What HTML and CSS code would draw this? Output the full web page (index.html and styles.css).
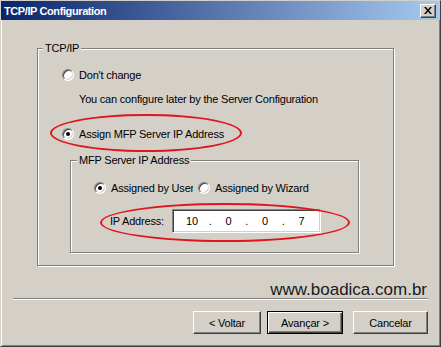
FILE: index.html
```html
<!DOCTYPE html>
<html lang="en">
<head>
    <meta charset="UTF-8">
    <title>TCP/IP Configuration</title>
    <link rel="stylesheet" href="styles.css">
</head>
<body>
<div class="window">
    <div class="titlebar">
        <span class="title">TCP/IP Configuration</span>
        <span class="close">
            <svg width="8" height="7" viewBox="0 0 8 7"><path d="M0 0h2l2 2.4 2-2.4h2l-3 3.5 3 3.5h-2l-2-2.4-2 2.4h-2l3-3.5z" fill="#000"/></svg>
        </span>
    </div>
    <div class="body">
        <div class="group group-tcp">
            <div class="group-title">TCP/IP</div>
            <div class="option opt-dont"><span class="radio"></span><span>Don't change</span></div>
            <div class="note">You can configure later by the Server Configuration</div>
            <div class="option opt-assign"><span class="radio checked"></span><span>Assign MFP Server IP Address</span></div>

            <div class="group group-mfp">
                <div class="group-title">MFP Server IP Address</div>
                <div class="mode-row">
                    <div class="option opt-user"><span class="radio checked"></span><span class="clip">Assigned by User</span></div>
                    <div class="option opt-wizard"><span class="radio"></span><span>Assigned by Wizard</span></div>
                </div>
                <div class="ip-row">
                    <span class="ip-label">IP Address:</span>
                    <div class="ip-box">
                        <span class="octet">10</span><span class="dot">.</span>
                        <span class="octet">0</span><span class="dot">.</span>
                        <span class="octet">0</span><span class="dot">.</span>
                        <span class="octet">7</span>
                    </div>
                </div>
            </div>
        </div>

        <div class="watermark">www.boadica.com.br</div>
        <div class="separator"></div>

        <div class="buttons">
            <span class="btn btn-back">&lt; Voltar</span>
            <span class="btn btn-next btn-default">Avançar &gt;</span>
            <span class="btn btn-cancel">Cancelar</span>
        </div>
    </div>

    <!-- marcações vermelhas por cima da janela -->
    <div class="mark mark-assign"></div>
    <div class="mark mark-ip"></div>
</div>
</body>
</html>
```

FILE: styles.css
```css
* {
    box-sizing: border-box;
}
body {
    margin: 0;
    background: #d4d0c8;
}
.window {
    position: relative;
    width: 441px;
    height: 347px;
    background: #d4d0c8;
    border: 1px solid;
    border-color: #d4d0c8 #404040 #404040 #d4d0c8;
    box-shadow: inset 1px 1px #fff, inset -1px -1px #808080;
    font-family: "Liberation Sans", Arial, sans-serif;
    font-size: 11px;
    letter-spacing: -0.2px;
    color: #000;
    display: flex;
    flex-direction: column;
}
.titlebar {
    height: 19px;
    padding: 0 4px 0 3px;
    background: linear-gradient(to right, #0a246a, #a6caf0);
    display: flex;
    align-items: center;
    justify-content: space-between;
}
.title {
    color: #fff;
    font-weight: bold;
    letter-spacing: -0.4px;
}
.close {
    width: 16px;
    height: 14px;
    background: #d4d0c8;
    border: 1px solid;
    border-color: #fff #404040 #404040 #fff;
    box-shadow: inset -1px -1px #808080;
    display: flex;
    align-items: center;
    justify-content: center;
}
.body {
    flex: 1;
    display: flex;
    flex-direction: column;
}

/* group box */
.group {
    border: 1px solid #808080;
    box-shadow: inset 1px 1px #fff, 1px 1px #fff;
    display: flex;
    flex-direction: column;
    align-items: flex-start;
}
.group-title {
    margin: -7px 0 0 5px;
    padding: 0 2px;
    line-height: 13px;
    background: #d4d0c8;
}
.group-tcp {
    margin: 28px 0 0 36px;
    width: 357px;
    height: 218px;
}
.group-mfp {
    margin: 18px 0 0 32px;
    width: 289px;
    height: 93px;
}
.group-mfp .group-title {
    margin-left: 6px;
}

/* radio */
.option {
    height: 16px;
    display: flex;
    align-items: center;
}
.radio {
    position: relative;
    width: 12px;
    height: 12px;
    margin-right: 5px;
    flex-shrink: 0;
    border-radius: 50%;
    background: #fff;
    border: 1px solid;
    border-color: #808080 #fff #fff #808080;
    box-shadow: inset 1px 1px #404040, inset -1px -1px #d4d0c8;
}
.radio.checked::after {
    content: '';
    position: absolute;
    left: 3px;
    top: 3px;
    width: 4px;
    height: 4px;
    border-radius: 50%;
    background: #000;
}
.opt-dont {
    margin: 12px 0 0 24px;
}
.note {
    margin: 8px 0 0 41px;
    line-height: 16px;
}
.opt-assign {
    margin: 19px 0 0 24px;
}
.mode-row {
    margin: 13px 0 0 23px;
    display: flex;
}
.clip {
    width: 82px;
    overflow: hidden;
    white-space: nowrap;
}
.opt-wizard {
    margin-left: 5px;
}

/* ip */
.ip-row {
    margin: 13px 0 0 39px;
    display: flex;
    align-items: center;
}
.ip-label {
    width: 62px;
}
.ip-box {
    width: 149px;
    height: 24px;
    padding-left: 6px;
    background: #fff;
    border: 1px solid;
    border-color: #808080 #fff #fff #808080;
    box-shadow: inset 1px 1px #404040, inset -1px -1px #d4d0c8;
    display: flex;
    align-items: center;
}
.octet {
    width: 26px;
    text-align: center;
}
.dot {
    width: 10.5px;
    text-align: center;
}

.watermark {
    margin: 15px 13px 0 0;
    font-size: 17px;
    line-height: 17px;
    letter-spacing: 0;
    color: #1a1a1a;
    text-align: right;
}
.separator {
    margin: 0 12px;
    height: 2px;
    border-top: 1px solid #808080;
    border-bottom: 1px solid #fff;
}

/* botões */
.buttons {
    margin-top: 11px;
    padding-left: 192px;
    display: flex;
}
.btn {
    height: 23px;
    display: flex;
    align-items: center;
    justify-content: center;
    background: #d4d0c8;
    border: 1px solid;
    border-color: #fff #404040 #404040 #fff;
    box-shadow: inset -1px -1px #808080;
}
.btn-default {
    border-color: #000;
    box-shadow: inset 1px 1px #fff, inset -1px -1px #404040, inset -2px -2px #808080;
}
.btn-back {
    width: 68px;
}
.btn-next {
    width: 76px;
    margin-left: 6px;
}
.btn-cancel {
    width: 75px;
    margin-left: 10px;
}

.mark {
    position: absolute;
    border: 2px solid #e0141c;
    border-radius: 50%;
}
.mark-assign {
    left: 49px;
    top: 113px;
    width: 192px;
    height: 38px;
}
.mark-ip {
    left: 99px;
    top: 202px;
    width: 250px;
    height: 39px;
}
```
